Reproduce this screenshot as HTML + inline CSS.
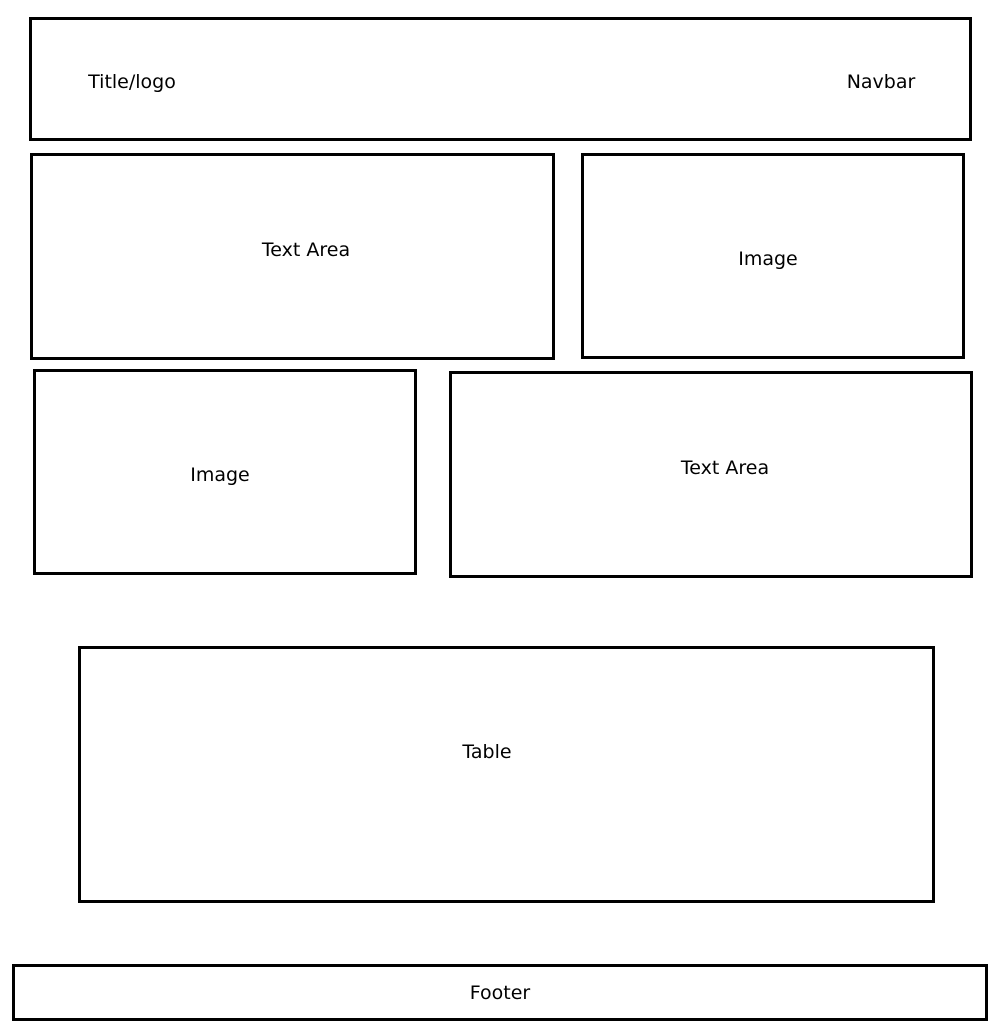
<!DOCTYPE html>
<html><head><meta charset="utf-8"><style>
html,body{margin:0;padding:0;background:#fff;width:1000px;height:1026px;overflow:hidden}
.b{position:absolute;border:3px solid #000;box-sizing:border-box}
.t{position:absolute;font-family:"DejaVu Sans","Liberation Sans",sans-serif;font-size:19px;color:#000;transform:translate(-50%,-50%);white-space:nowrap}
</style></head><body>
<div class="b" style="left:29px;top:17px;width:943px;height:124px"></div>
<div class="t" style="left:132px;top:82px">Title/logo</div>
<div class="t" style="left:881px;top:82px">Navbar</div>

<div class="b" style="left:30px;top:153px;width:525px;height:207px"></div>
<div class="t" style="left:306px;top:250px">Text Area</div>

<div class="b" style="left:581px;top:153px;width:384px;height:206px"></div>
<div class="t" style="left:768px;top:259px">Image</div>

<div class="b" style="left:33px;top:369px;width:384px;height:206px"></div>
<div class="t" style="left:220px;top:475px">Image</div>

<div class="b" style="left:449px;top:371px;width:524px;height:207px"></div>
<div class="t" style="left:725px;top:468px">Text Area</div>

<div class="b" style="left:78px;top:646px;width:857px;height:257px"></div>
<div class="t" style="left:487px;top:752px">Table</div>

<div class="b" style="left:12px;top:964px;width:976px;height:57px"></div>
<div class="t" style="left:500px;top:993px">Footer</div>
</body></html>
